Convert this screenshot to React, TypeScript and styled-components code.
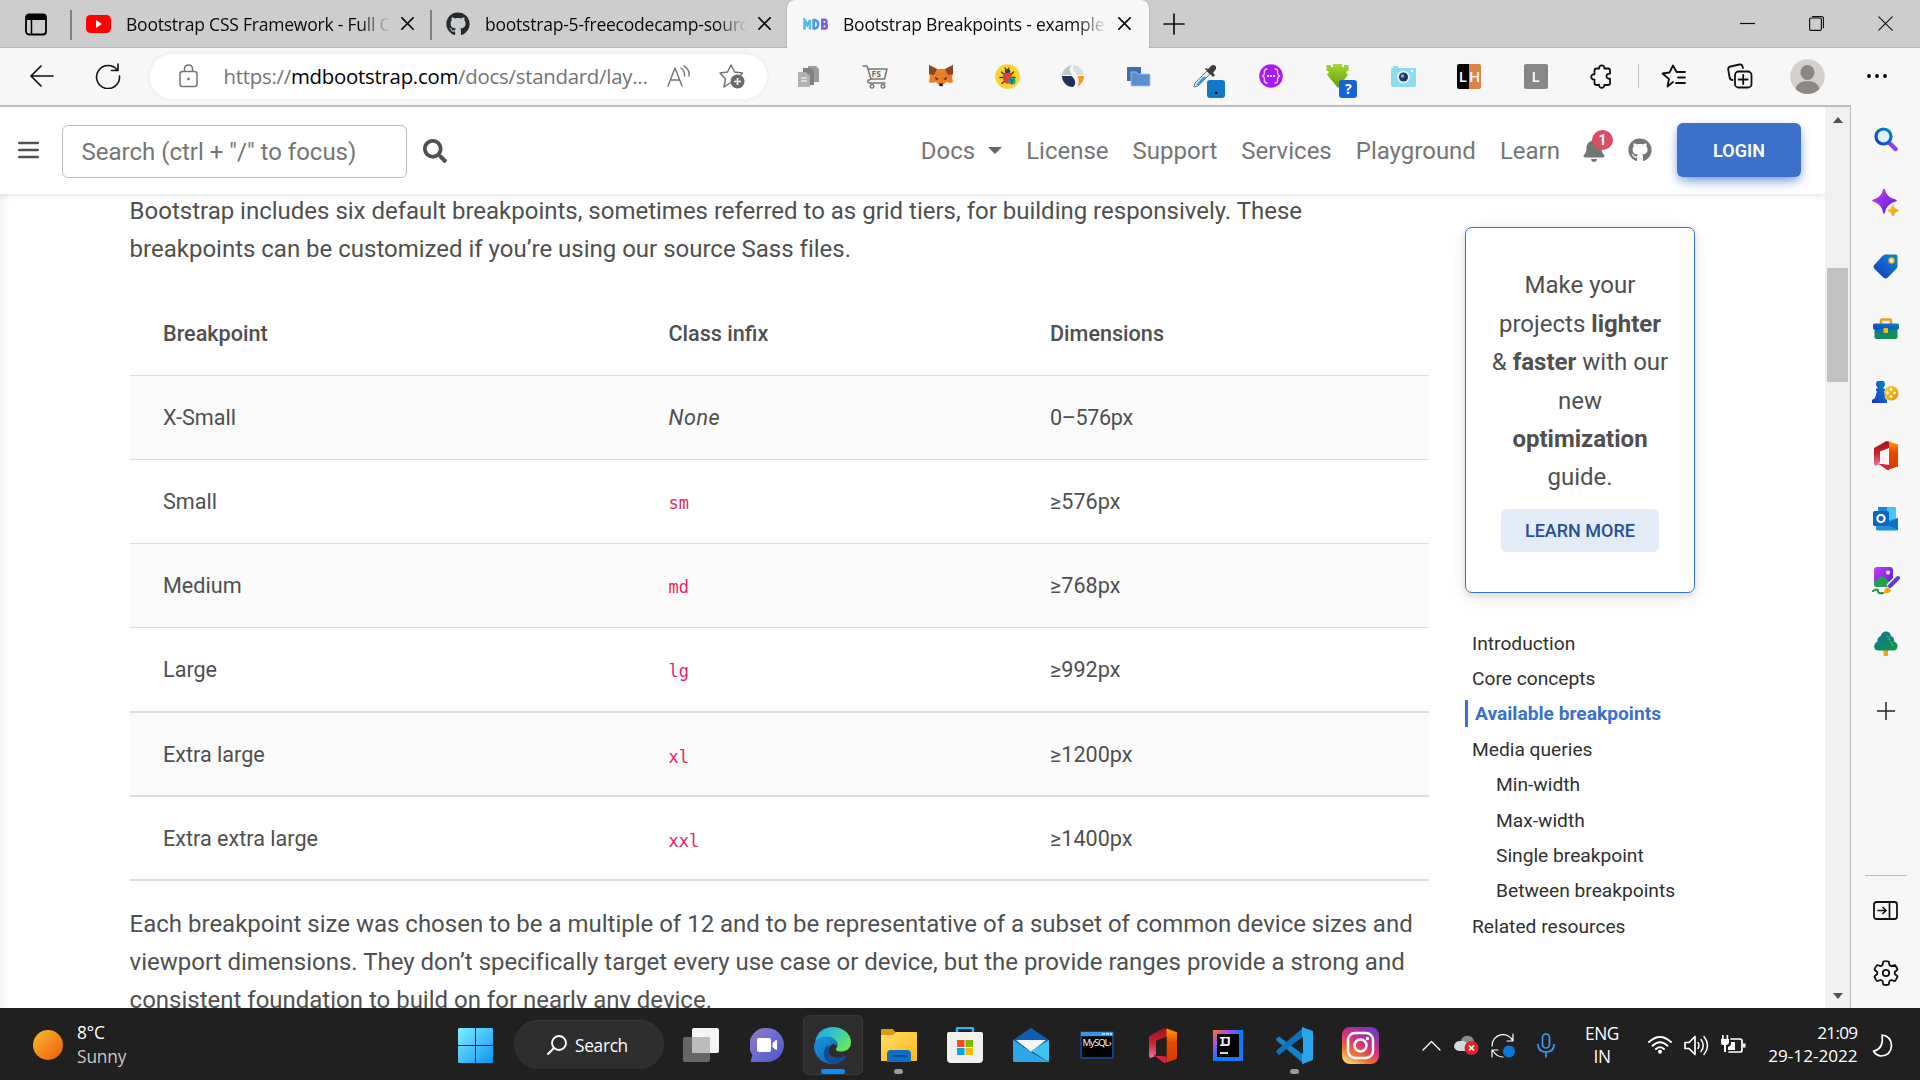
import React from 'react';
import styled, { createGlobalStyle, css } from 'styled-components';
import { FaBell, FaGithub, FaSearch } from 'react-icons/fa';

const Global = createGlobalStyle`
  * { box-sizing: border-box; }
  html, body { margin: 0; padding: 0; overflow: hidden; }
  body { font-family: Roboto, "Liberation Sans", sans-serif; color: #4f4f4f; }
  svg { display: block; flex: none; }
`;

const ui = css`font-family: "Open Sans", "Noto Sans", sans-serif;`;

const Screen = styled.div`
  width: 1920px; height: 1080px; display: flex; flex-direction: column; overflow: hidden; background: #fff;
`;

/* ---------- tab strip ---------- */
const TabStrip = styled.div`
  ${ui} height: 48px; flex: none; display: flex; background: #cdcdcd; box-shadow: inset 0 -1px 1px #b5b5b5;
`;
const TabActions = styled.div`
  width: 70px; display: flex; align-items: center; padding-left: 25px;
`;
const Tab = styled.div<{ $w: number; $active?: boolean; $pad: number }>`
  width: ${p => p.$w}px; display: flex; align-items: center; padding: 0 ${p => (p.$active ? 18 : 16)}px 1px ${p => p.$pad}px;
  position: relative;
  ${p => p.$active ? css`background: #f7f7f7; border-radius: 8px 8px 0 0; box-shadow: 0 0 2px #999; clip-path: inset(0 -3px 0 -3px);`
    : css`&::before { content: ''; position: absolute; left: 0; top: 10px; height: 30px; width: 1.5px; background: #808080; }`}
`;
const TabTitle = styled.div`
  flex: 1; min-width: 0; margin: 0 11px 0 15px; font-size: 17.5px; letter-spacing: -0.22px; line-height: 26px; color: #0a0a0a;
  white-space: nowrap; overflow: hidden;
  mask-image: linear-gradient(90deg, #000 calc(100% - 30px), transparent);
`;
const NewTab = styled.div`display: flex; align-items: center; padding-left: 14px; padding-bottom: 1px; flex: 1;`;
const WindowButtons = styled.div`
  display: flex; align-items: center; gap: 54px; padding-right: 27px; padding-bottom: 1px;
`;

/* ---------- toolbar ---------- */
const Toolbar = styled.div`
  ${ui} height: 57px; flex: none; display: flex; align-items: center; background: #f7f7f7; padding-bottom: 1px;
`;
const NavButtons = styled.div`
  width: 150px; display: flex; align-items: center; gap: 41px; padding-left: 29px; padding-bottom: 1px;
`;
const AddressBar = styled.div`
  width: 617px; height: 45px; border-radius: 23px; background: #fff; display: flex; align-items: center; padding: 0 21px 1px 29px;
  box-shadow: 0 0 5px rgba(0,0,0,.08);
`;
const Url = styled.div`
  flex: 1; margin-left: 25.5px; font-size: 20.4px; letter-spacing: -0.26px; color: #737373; white-space: nowrap;
  b { font-weight: 400; color: #000; }
`;
const AddressActions = styled.div`display: flex; align-items: center; gap: 28px;`;
const Extensions = styled.div`display: flex; margin-left: 9px;`;
const Slot = styled.div`
  width: 66.05px; height: 46px; display: flex; align-items: center; justify-content: center; position: relative;
`;
const SlotBadge = styled.span<{ $bg: string; $fg: string }>`
  position: absolute; left: 35px; bottom: 1px; width: 18px; height: 18px; border-radius: 3px;
  background: ${p => p.$bg}; color: ${p => p.$fg}; font-size: 14px; font-weight: 700; line-height: 18px; text-align: center;
`;
const Letters = styled.div<{ $bg: string }>`
  width: 24px; height: 25px; display: flex; align-items: center; justify-content: space-around; color: #fff;
  background: ${p => p.$bg}; font-size: 15px; border-radius: 2px; line-height: 25px; font-weight: 600;
`;
const Divider = styled.div`width: 1.5px; height: 24px; background: #c9c9c9; margin-left: 3px;`;
const BrowserActions = styled.div`
  display: flex; align-items: center; flex: 1; padding-left: 22px;
`;
const ActionSlot = styled.div<{ $w: number }>`width: ${p => p.$w}px; display: flex; align-items: center; justify-content: flex-start;`;

/* ---------- page ---------- */
const Body = styled.div`height: 903px; flex: none; display: flex; background: #f7f7f7;`;
const Viewport = styled.div`
  width: 1851px; border-top: 2px solid #bdbdbd; border-right: 1.5px solid #bdbdbd; display: flex; background: #fff; overflow: hidden;
`;
const Page = styled.div`
  width: 1825px; display: flex; flex-direction: column; overflow: hidden;
  background: linear-gradient(90deg, #f3f3f3, #fff 10px);
`;
const Header = styled.header`
  height: 87px; flex: none; display: flex; align-items: center; padding: 0 24px 0 18px;
  box-shadow: 0 1px 6px rgba(0,0,0,.14); z-index: 2; background: #fff;
`;
const MenuButton = styled.div`margin-bottom: 2px;`;
const SearchBox = styled.div`
  width: 345px; height: 53px; margin: 1px 16px 0 23px; border: 1px solid #bdbdbd; border-radius: 6px; padding-left: 18.5px;
  font-size: 24px; line-height: 52px; color: #757575;
`;
const SiteNav = styled.nav`
  margin-left: auto; display: flex; align-items: center; gap: 24px; font-size: 24px; color: #757575;
`;
const NavItem = styled.a`display: flex; align-items: center;`;
const Caret = styled.i`
  margin-left: 13px; border: 7px solid transparent; border-top-color: #666; border-bottom: 0;
`;
const BellWrap = styled.div`position: relative; width: 22px; margin: 0 0 2px -2px;`;
const BellBadge = styled.span`
  position: absolute; left: 10px; top: -8px; width: 21px; height: 20px; border-radius: 50%; background: #dc4c64; color: #fff;
  font: 700 14px/20px Roboto, sans-serif; text-align: center;
`;
const GithubLink = styled.a`margin: 0 1px 1px 0;`;
const Login = styled.button`
  width: 124px; height: 54px; border: 0; border-radius: 6px; background: #3b71ca; color: #fff; padding: 0; margin-bottom: 1px;
  font: 600 18px Roboto, sans-serif; box-shadow: 0 6px 13px -4px rgba(59,113,202,.75), 0 3px 8px rgba(59,113,202,.25);
`;
const Columns = styled.div`flex: 1; min-height: 0; display: flex;`;
const Article = styled.main`
  width: 1429px; padding: 0 0 0 130px; margin-top: -2.5px; flex: none;
`;
const Para = styled.p<{ $mt?: number }>`
  margin: ${p => p.$mt || 0}px 0 0 -0.4px; font-size: 24px; line-height: 38.2px; white-space: nowrap; letter-spacing: -0.006px;
`;
const Table = styled.div`margin-top: 25px;`;
const Row = styled.div<{ $head?: boolean; $striped?: boolean; $thick?: boolean; $h: number }>`
  display: grid; grid-template-columns: 505.5px 381.5px 1fr; align-items: center; height: ${p => p.$h}px;
  padding: ${p => (p.$thick && p.$h < 85 ? 2 : 0)}px 0 0 33px;
  font-size: 21.6px; font-weight: ${p => (p.$head ? 500 : 400)};
  background: ${p => (p.$striped ? '#fafafa' : '#fff')};
  border-bottom: ${p => (p.$thick ? 2 : 1)}px solid #dcdedd;
  em { letter-spacing: 0.5px; }
`;
const Code = styled.code`
  font-family: "DejaVu Sans Mono", monospace; font-size: 17px; color: #e91e63; padding-top: 4px;
`;
const Dimension = styled.span<{ $tight: boolean }>`letter-spacing: ${p => (p.$tight ? -0.38 : 0)}px;`;
const Aside = styled.aside`
  width: 360px; padding: 33px 0 0 36px; display: flex; flex-direction: column;
`;
const Card = styled.div`
  width: 230px; height: 366px; border: 1.5px solid #3b71ca; border-radius: 7px; background: #fff; text-align: center;
  box-shadow: 0 3px 8px rgba(0,0,0,.13), 0 4px 26px rgba(0,0,0,.06); padding: 38.4px 24px 0;
  font-size: 24px; line-height: 38.4px;
`;
const LearnMore = styled.button`
  width: 158px; height: 43px; margin: 12.6px auto 0; border: 0; border-radius: 6px; background: #e3ebf7; color: #285192;
  font: 500 18px Roboto, sans-serif; display: block; padding: 0;
`;
const Toc = styled.ul`list-style: none; margin: 32px 0 0; padding: 0; font-size: 19.2px; color: #303030;`;
const TocItem = styled.li<{ $indent?: boolean; $active?: boolean }>`
  height: 35.35px; line-height: 37px; padding-left: ${p => (p.$indent ? 31 : 7)}px; white-space: nowrap;
  ${p => p.$active && css`
    height: 27px; margin: 4.2px 0 4.15px; line-height: 28px; padding-left: 7px; border-left: 3px solid #3b71ca; color: #3b71ca; font-weight: 700;
  `}
`;
const Scrollbar = styled.div`
  width: 25px; background: #f0f0f0; display: flex; flex-direction: column; align-items: center;
`;
const ScrollArrow = styled.i<{ $down?: boolean }>`
  width: 0; border: 5.5px solid transparent;
  ${p => p.$down ? css`border-top: 6px solid #505050; border-bottom: 0; margin: auto 0 9px;` : css`border-bottom: 6px solid #505050; border-top: 0; margin-top: 10px;`}
`;
const ScrollThumb = styled.div`width: 21px; height: 114px; margin-top: 145px; background: #c1c1c1;`;

/* ---------- browser sidebar ---------- */
const Sidebar = styled.div`
  width: 69px; display: flex; flex-direction: column; align-items: center; padding-top: 4px;
`;
const SideSlot = styled.div<{ $h?: number }>`height: ${p => p.$h || 62.95}px; display: flex; align-items: center;`;
const SideRule = styled.div`width: 42px; height: 1px; background: #b9b9b9; margin-top: 128px; margin-bottom: 3px;`;

/* ---------- taskbar ---------- */
const Taskbar = styled.div`
  ${ui} height: 72px; flex: none; background: #202020; color: #fff; display: flex; align-items: center; font-size: 17.3px; padding-top: 2px;
`;
const Weather = styled.div`
  width: 442px; display: flex; align-items: center; padding-left: 33px; gap: 14px; line-height: 24px; letter-spacing: -0.1px;
`;
const Muted = styled.div`color: #c8c8c8;`;
const Start = styled.div`width: 72px; padding-left: 16px;`;
const TaskSearch = styled.div`
  width: 150px; height: 49px; border-radius: 25px; background: #2e2e2e; border-top: 1px solid #383838; display: flex; align-items: center;
  padding-left: 33px; gap: 8px; letter-spacing: -0.3px; margin-bottom: 1px;
`;
const Apps = styled.div`display: flex; margin-left: 4px; width: 737px;`;
const AppTile = styled.div<{ $active?: boolean }>`
  width: 60px; height: 60px; margin: 0 2.97px; display: flex; align-items: center; justify-content: center; border-radius: 6px; position: relative;
  ${p => p.$active && css`background: #2d2d2d; border: 1px solid #393939;`}
`;
const Indicator = styled.i<{ $active?: boolean }>`
  position: absolute; bottom: ${p => (p.$active ? 0 : 1)}px; width: ${p => (p.$active ? 24 : 9)}px; height: 5px; border-radius: 3px;
  background: ${p => (p.$active ? '#0c8cf5' : '#9a9a9a')};
`;
const Tray = styled.div`display: flex; align-items: center; flex: 1; padding-left: 17px;`;
const TrayGroup = styled.div<{ $gap: number }>`display: flex; align-items: center; gap: ${p => p.$gap}px;`;
const MicSlot = styled.div`margin-left: 21px;`;
const Lang = styled.div`width: 48px; margin: 0 21.5px 0 23px; text-align: center; line-height: 23px; letter-spacing: -0.4px;`;
const Clock = styled.div`
  width: 112px; text-align: right; line-height: 23px; font-size: 17.2px; letter-spacing: -0.05px; margin: 0 14px 2px 0; white-space: nowrap;
`;
const Time = styled.div`letter-spacing: -0.7px;`;

const line = (c = '#111', w = 1.6) => ({ fill: 'none', stroke: c, strokeWidth: w, strokeLinecap: 'round' as const, strokeLinejoin: 'round' as const });

const Defs = () => (
  <svg width="0" height="0" aria-hidden>
    <defs>
      <linearGradient id="purple" x1="0" y1="0" x2="1" y2="1"><stop stopColor="#d23bf0" /><stop offset="1" stopColor="#4b1fe0" /></linearGradient>
      <linearGradient id="blue" x1="0" y1="1" x2="1" y2="0"><stop stopColor="#1438c8" /><stop offset="1" stopColor="#0a8ac4" /></linearGradient>
      <linearGradient id="gold" x1="0" y1="0" x2="1" y2="1"><stop stopColor="#ffcf3f" /><stop offset="1" stopColor="#e39200" /></linearGradient>
      <linearGradient id="teal" x1="0" y1="0" x2="1" y2="1"><stop stopColor="#0f6fa8" /><stop offset="1" stopColor="#109a3c" /></linearGradient>
      <linearGradient id="officeL" x1="0" y1="0" x2="0" y2="1"><stop stopColor="#a30f1a" /><stop offset=".5" stopColor="#c92530" /><stop offset="1" stopColor="#e776ac" /></linearGradient>
      <linearGradient id="officeR" x1="0" y1="0" x2="0" y2="1"><stop stopColor="#ff9a00" /><stop offset=".4" stopColor="#e64a00" /><stop offset="1" stopColor="#d63a00" /></linearGradient>
      <linearGradient id="sun" x1="0" y1="0" x2="1" y2="1"><stop stopColor="#f5bd30" /><stop offset="1" stopColor="#f05a0a" /></linearGradient>
      <linearGradient id="win" x1="0" y1="0" x2="1" y2="1"><stop stopColor="#80f0ff" /><stop offset="1" stopColor="#0a94f5" /></linearGradient>
      <linearGradient id="chat" x1="0" y1="0" x2="1" y2="1"><stop stopColor="#9a78c0" /><stop offset=".5" stopColor="#6a6bd4" /><stop offset="1" stopColor="#5054c4" /></linearGradient>
      <linearGradient id="edgeTop" x1="0" y1="0" x2="1" y2=".6"><stop stopColor="#1d9fe0" /><stop offset=".5" stopColor="#33c4cc" /><stop offset="1" stopColor="#66e858" /></linearGradient>
      <linearGradient id="edgeLow" x1="0" y1="0" x2="1" y2="1"><stop stopColor="#1799e4" /><stop offset="1" stopColor="#0c59a4" /></linearGradient>
      <linearGradient id="folder" x1="0" y1="0" x2="1" y2="1"><stop stopColor="#ffdc6a" /><stop offset="1" stopColor="#fdb913" /></linearGradient>
      <linearGradient id="jet" x1="0" y1="0" x2="1" y2="1"><stop stopColor="#f97a12" /><stop offset=".25" stopColor="#b84be0" /><stop offset=".5" stopColor="#087cfa" /><stop offset="1" stopColor="#2a72f0" /></linearGradient>
      <linearGradient id="insta" x1=".2" y1="1" x2=".8" y2="0"><stop stopColor="#fed576" /><stop offset=".25" stopColor="#f47133" /><stop offset=".55" stopColor="#d62f7c" /><stop offset="1" stopColor="#6a3ac8" /></linearGradient>
      <linearGradient id="green" x1="0" y1="0" x2="0" y2="1"><stop stopColor="#a6d82c" /><stop offset="1" stopColor="#5d9d14" /></linearGradient>
    </defs>
  </svg>
);

const Cross = ({ s = 13, w = 1.7 }: { s?: number; w?: number }) => (
  <svg width={s} height={s} viewBox="0 0 13 13"><path d="M.7.7l11.6 11.6M12.3.7L.7 12.3" {...line('#111', w)} /></svg>
);
const TabMenuIcon = () => (
  <svg width="22" height="23" viewBox="0 0 22 23"><rect x="1" y="1.5" width="20" height="20" rx="3" {...line('#000', 1.8)} /><path d="M1 2h20v5H1z" /><path d="M6.5 7v14" {...line('#000', 1.5)} /></svg>
);
const YouTube = () => (
  <svg width="25" height="18" viewBox="0 0 25 18"><rect width="25" height="18" rx="4.5" fill="#f00" /><path d="M10 5v8l6-4z" fill="#fff" /></svg>
);
const MdbIcon = () => (
  <svg width="25" height="12" viewBox="0 0 25 12" fill="none" strokeWidth="2.6">
    <path d="M1.5 11.500V2l2.800 5L7 2v9.500" stroke="#4bc0ec" /><path d="M10.700 2v8.500c6 .6 6-9 0-8.500z" stroke="#4596e0" /><path d="M19.300 1.700v8.800h3c2 0 2-4.300-.3-4.300h-2.700 2.700c2 0 2-4.500-.3-4.500z" stroke="#7a62cc" />
  </svg>
);
const Puzzle = () => (
  <svg width="24" height="25" viewBox="0 0 24 25"><path d="M6.500 4.500h2.700c-.9-4.300 6-4.300 5.100 0H18q2 0 2 2v3.200c-4.700-.6-4.700 5.600 0 5V19q0 2-2 2h-3.700c.6 3.700-5.700 3.700-5.100 0H6.500q-2 0-2-2v-3.500c-4.300.8-4.300-6 0-5.200V6.500q0-2 2-2z" {...line('#111', 1.8)} /></svg>
);
const Mic = () => (
  <svg width="18" height="25" viewBox="0 0 18 25"><rect x="5.500" y="1" width="7" height="14" rx="3.500" {...line('#3b9cf0', 1.7)} /><path d="M1 11.500q0 7.500 8 7.500t8-7.500M9 19v5" {...line('#3b9cf0', 1.7)} /></svg>
);

const extensionIcons: React.ReactNode[] = [
  <svg width="22" height="23" viewBox="0 0 22 23"><path d="M10 1h8l3 3v13H10z" fill="#9c9c9c" /><path d="M5 3h8l3 3v14H5z" fill="#7f7f7f" /><path d="M0 7h8l4 4v11H0z" fill="#b1b1b1" /><path d="M3 13h6M3 16h6" stroke="#e6e6e6" strokeWidth="1.5" /></svg>,
  <svg width="26" height="25" viewBox="0 0 26 25"><path d="M1 2h4l4 13h13.500L25 5H6M9 15l-3 1.500q-1 2.500 2 2.500h15" {...line('#757575', 1.5)} /><circle cx="10" cy="22.300" r="1.800" {...line('#757575', 1.4)} /><circle cx="21" cy="22.300" r="1.800" {...line('#757575', 1.4)} /><text x="9.500" y="13.200" fontSize="8.500" fontWeight="700" fontFamily="Open Sans" fill="#6a6a6a">FS</text></svg>,
  <svg width="24" height="23" viewBox="0 0 24 23"><path d="M0 0l8 4h8l8-4v9l-1 3 1 5-2 1-5-1-2 2H9l-2-2-5 1-2-1 1-5-1-3z" fill="#ee7d22" /><path d="M0 0l8 4-3 6-5-1zM24 0l-8 4 3 6 5-1z" fill="#85492a" /><path d="M6 12l4 2-3 1zM18 12l-4 2 3 1z" fill="#333" /><path d="M9 19h6l-1 3h-4z" fill="#ddd2c8" /><path d="M10 18.500h4l-.6 2.500h-2.800z" fill="#111" /></svg>,
  <svg width="25" height="25" viewBox="0 0 25 25"><circle cx="12.500" cy="12.500" r="12.300" fill="#fbd32f" /><path d="M6.500 8l3 3M5 13.500h4M7 19.500l3-3M18.500 8l-3 3M20 13.500h-4M10 4l2 3 2-3" {...line('#4a3324', 1.3)} /><ellipse cx="12.500" cy="13.500" rx="4.500" ry="6.200" fill="#e2403f" /><ellipse cx="12.500" cy="7" rx="2.800" ry="2" fill="#463a30" /><circle cx="17" cy="17" r="3.500" fill="#15a98d" /><path d="M15.500 15.300l1.500 1.700 1.500-1.700M17 17v2" {...line('#064', 1)} /></svg>,
  <svg width="22" height="22" viewBox="0 0 22 22"><path d="M10 0A11 11 0 000 10h10.500C7 7 7 3 10 0z" fill="#c5c8cb" /><path d="M12 0c-3 4 1 7 4 10h6A11 11 0 0012 0z" fill="#dcdee0" /><path d="M0 11a11 11 0 0011 11c4-3 2-8-1.500-11z" fill="#232c5c" /><path d="M15.500 11H22c0 5-3 9-7 10.500 2-3 2.500-7 .5-10.500z" fill="#f8981d" /></svg>,
  <svg width="24" height="21" viewBox="0 0 24 21"><path d="M0 1h14v14H0z" fill="#3f6fb0" /><path d="M4 6h5l2 2h12v12H4z" fill="#5b8fd2" stroke="#a9c5ea" strokeWidth=".8" /></svg>,
  <svg width="26" height="25" viewBox="0 0 26 25"><path d="M2 23l1-4L15 7l3 3L6 22z" fill="#d9e8f2" stroke="#777" /><path d="M4 21l7-8h3.500l-8 8z" fill="#2a9ae0" /><path d="M13 5l8 8 2-2-2-2 3-4c1-4-3-5-5-3l-3 3-2-1z" fill="#3d3d3d" /></svg>,
  <svg width="24" height="24" viewBox="0 0 24 24"><circle cx="12" cy="12" r="11.800" fill="#a91cf0" /><path d="M8 5q-3 0-2.500 3.500 0 2.500-2 3.500 2 1 2 3.500Q5 19 8 19M16 5q3 0 2.500 3.500 0 2.500 2 3.500-2 1-2 3.500Q19 19 16 19" {...line('#e9c9fb', 1.4)} /><path d="M9 12h.1M12 12h.1M15 12h.1" {...line('#fff', 2)} /></svg>,
  <svg width="25" height="25" viewBox="0 0 25 25"><path d="M1.500 1h4.500v2h2V0h9v3h2V1h4.500v6h-2v3h2L13 24 1.500 10h2V7h-2z" fill="url(#green)" /></svg>,
  <svg width="25" height="22" viewBox="0 0 25 22"><path d="M1 3h1V1h5v2h17q1 0 1 1v16q0 2-2 2H2q-2 0-2-2V4z" fill="#8bdcec" /><circle cx="12.500" cy="12" r="6.300" fill="#e4f6fa" /><circle cx="12.500" cy="12" r="4.600" fill="#1d3a5e" /><circle cx="11.500" cy="11" r="1.700" fill="#7ab0d8" /><circle cx="21" cy="6" r="1.200" fill="#fff" /></svg>,
  <Letters $bg="linear-gradient(90deg,#000 50%,#e08245 50%)"><span>L</span><span>H</span></Letters>,
  <Letters $bg="#878787">L</Letters>,
  <Puzzle />,
];
const badges: Record<number, [string, string, string]> = { 6: ['.', '#0f78c8', '#000'], 8: ['?', '#1565d8', '#fff'] };

const Office = ({ w = 24, h = 29, hole = '#f7f7f7' }: { w?: number; h?: number; hole?: string }) => (
  <svg width={w} height={h} viewBox="0 0 24 29" preserveAspectRatio="none"><path d="M0 7L12.500 0 16 1v7L6 11v12l-5 2-1-2z" fill="url(#officeL)" /><path d="M15 .5l9 3v22l-9 3z" fill="url(#officeR)" /><path d="M4 22.500l11 1.200V29h-2z" fill="#d8203c" /><path d="M6 10.500L15 7v16.500L4 22.500l2-1z" fill={hole} /></svg>
);

const sidebarIcons: React.ReactNode[] = [
  <svg width="24" height="26" viewBox="0 0 24 26"><path d="M15.500 16l6 6" stroke="#8b45e8" strokeWidth="4.500" strokeLinecap="round" /><circle cx="9.500" cy="9.500" r="7.500" fill="#dff4ff" stroke="url(#blue)" strokeWidth="3.200" /></svg>,
  <svg width="28" height="28" viewBox="0 0 28 28"><path d="M12 0q1.500 9 12 11.500Q13.500 14.500 12 24 10.500 14.500 1 11.500 10.500 9 12 0z" fill="url(#purple)" stroke="url(#purple)" strokeWidth="1.500" strokeLinejoin="round" /><path d="M21 16q.8 4.500 5.500 5.500-4.700 1.200-5.500 5.500-.8-4.300-5.500-5.500Q20.200 20.500 21 16z" fill="url(#gold)" stroke="url(#gold)" /></svg>,
  <svg width="25" height="25" viewBox="0 0 25 25"><path d="M12 .5h11q1.500 0 1.500 1.500v10q0 1.500-1 2.500l-9 9.200q-2 1.600-4 0l-9-9q-2-2 0-4L9.500 2Q11 .5 12 .5z" fill="url(#blue)" /><circle cx="18.500" cy="6.500" r="2.500" fill="#d8f4ff" stroke="#f5b81c" strokeWidth="1.500" /></svg>,
  <svg width="26" height="22" viewBox="0 0 26 22"><path d="M8 7V3q0-1.500 1.500-1.500h7Q18 1.500 18 3v4" fill="none" stroke="#e2a314" strokeWidth="2.500" /><rect x="1.500" y="8" width="23" height="13" rx="2" fill="url(#teal)" /><rect y="5.500" width="26" height="6" rx="1.500" fill="url(#blue)" /><rect x="10.500" y="10" width="4.500" height="5" rx="1" fill="#f8b91f" /></svg>,
  <svg width="27" height="23" viewBox="0 0 27 23"><rect x="12" y="5" width="14.500" height="14.500" rx="7" fill="url(#gold)" /><g fill="#fff5d0"><circle cx="19" cy="8.500" r="1.400" /><circle cx="15.500" cy="12" r="1.400" /><circle cx="22.500" cy="12" r="1.400" /><circle cx="19" cy="15.500" r="1.400" /></g><path d="M5 10h-1V8l2-1a4.500 4.500 0 115 0l2 1v2h-1l1 7 2 2v3H0v-3l3-2z" fill="url(#blue)" /></svg>,
  <Office />,
  <svg width="25" height="25" viewBox="0 0 25 25"><rect x="5" y="1" width="18" height="14" rx="1" fill="#49c5f3" /><path d="M5 1h9v8H5z" fill="#1a86d9" /><path d="M3 12l10 3 12-3v11q0 1.500-1.500 1.500h-18Q3 24.500 3 23z" fill="#1c94e0" /><path d="M25 12L13 18l12 6z" fill="#1270b8" /><rect y="5" width="16" height="15" rx="1.500" fill="#0b66c3" /><circle cx="8" cy="12.500" r="3.600" fill="none" stroke="#fff" strokeWidth="2.200" /></svg>,
  <svg width="28" height="28" viewBox="0 0 28 28"><rect x="2" y="0" width="19" height="19" rx="3" fill="url(#purple)" /><circle cx="16" cy="5.500" r="2" fill="#fff" /><path d="M2 15l6-5q2-1.500 4 0l7 6q-2 4-6 4H4q-2 0-2-3z" fill="#24a04f" /><path d="M17 20l9-9" stroke="#f7f7f7" strokeWidth="7" /><path d="M18 19l8-8" stroke="#5b3be0" strokeWidth="4" strokeLinecap="round" /><path d="M12 26q0-5 4-6l3 3q-1 4-7 3z" fill="#f0a818" /><path d="M1 24q5-3 5 0t5 2" {...line('#158a3e', 2)} /></svg>,
  <svg width="24" height="26" viewBox="0 0 24 26"><rect x="9.500" y="17" width="4.500" height="8" rx="1" fill="#f3a21a" /><path d="M12 .5q4 0 5 4.500 4 1.500 3 5.500 4 1.500 3.500 5-.5 4-4 4h-15q-4 0-4.300-3.500-.2-3.500 3.300-5.500-.7-4 3.200-5.500Q8 .5 12 .5z" fill="url(#teal)" /><path d="M13 5q3 1 3 4M16 11q3 1 3 4" {...line('#4cc07c', 1)} /></svg>,
];

const rows: [string, string, string, number][] = [
  ['X-Small', '', '0–576px', 84], ['Small', 'sm', '≥576px', 84], ['Medium', 'md', '≥768px', 84],
  ['Large', 'lg', '≥992px', 85], ['Extra large', 'xl', '≥1200px', 84], ['Extra extra large', 'xxl', '≥1400px', 84],
];
const toc: { t: string; indent?: boolean; active?: boolean }[] = [
  { t: 'Introduction' }, { t: 'Core concepts' }, { t: 'Available breakpoints', active: true }, { t: 'Media queries' },
  { t: 'Min-width', indent: true }, { t: 'Max-width', indent: true }, { t: 'Single breakpoint', indent: true },
  { t: 'Between breakpoints', indent: true }, { t: 'Related resources' },
];

const apps: { icon: React.ReactNode; active?: boolean; running?: boolean }[] = [
  { icon: <svg width="36" height="35" viewBox="0 0 36 35"><rect y="9" width="27" height="25" rx="2" fill="#666" /><rect x="9" width="27" height="25" rx="2" fill="#f4f4f4" /><path d="M9 9h18v16H9z" fill="#bcbcbc" /></svg> },
  { icon: <svg width="34" height="35" viewBox="0 0 34 35"><path d="M17 0a17 17 0 110 34H2q-2 0-1-2l1.500-5A17 17 0 0117 0z" fill="url(#chat)" /><rect x="7" y="10" width="14" height="14" rx="2" fill="#fff" /><path d="M22.500 15l3.500-3q1 0 1 1v8q0 1-1 1l-3.500-3z" fill="#fff" /></svg> },
  { active: true, icon: <svg width="37" height="37" viewBox="0 0 37 37"><path d="M1 15C3 5 10 0 19 0c10 0 18 7 18 15 0 7-5 9.500-10 9.500-4 0-6-1.500-4.500-3.500C26 16 20 10 13 10 7 10 2 13 1 15z" fill="url(#edgeTop)" /><path d="M0 19C1 12 7 9.500 13 9.500c7 0 11 5.500 9.500 9.500-2-3-7-2-8 3-1 7 7 12 17 8-3 5-8 7-13 7C8 37 0 29 0 19z" fill="url(#edgeLow)" /><path d="M14.500 22c-1 7 7 12 18.500 6-3 6-9 9-14.500 9C10 35 6 24 14.500 17.500z" fill="#114c94" /></svg> },
  { running: true, icon: <svg width="36" height="34" viewBox="0 0 36 34"><path d="M0 2q0-1 1-1h11l3 4v6H0z" fill="#dd9a10" /><path d="M0 7h12l3-3h20q1 0 1 1v28H0z" fill="url(#folder)" /><path d="M6 34V26q0-4 4-4h16q4 0 4 4v8z" fill="#0f6fc4" /><path d="M11 28h14" stroke="#0a4e92" strokeWidth="2" strokeLinecap="round" /></svg> },
  { icon: <svg width="36" height="36" viewBox="0 0 36 36"><path d="M10 8V2q0-1 1-1h14q1 0 1 1v6" {...line('#33b2ee', 2.500)} /><path d="M0 7q0-2 2-2h32q2 0 2 2v25q0 4-4 4H4q-4 0-4-4z" fill="#f0f0f0" /><path d="M10 13h7.500v7H10z" fill="#f25022" /><path d="M18.500 13H26v7h-7.500z" fill="#7fba00" /><path d="M10 21h7.500v7H10z" fill="#00a4ef" /><path d="M18.500 21H26v7h-7.500z" fill="#ffb900" /></svg> },
  { icon: <svg width="36" height="35" viewBox="0 0 36 35"><path d="M0 12L18 0l18 12v6H0z" fill="#0f5fae" /><path d="M3 12h30L18 24z" fill="#f5f5f5" /><path d="M0 12l18 12 18 10H1q-1 0-1-1z" fill="#2ba7ea" /><path d="M36 12L18 23l18 11z" fill="#3cc4f4" /></svg> },
  { icon: <svg width="34" height="28" viewBox="0 0 34 28"><rect width="34" height="28" rx="1.500" fill="#163e7c" /><path d="M1 1h32v4H1z" fill="#3c94e0" /><path d="M22 2h3v2h-3zM26 2h3v2h-3zM30 2h2v2h-2z" fill="#a8d6f8" /><path d="M2 5.500h30V26H2z" fill="#000" /><text x="2.500" y="14.500" fontSize="9.500" fontFamily="Open Sans" fill="#fff" textLength="29">MySQL›</text></svg> },
  { icon: <Office w={28} h={35} hole="#202020" /> },
  { icon: <svg width="30" height="31" viewBox="0 0 30 31"><path d="M0 0h30v31H0z" fill="url(#jet)" /><path d="M4 4h22v23H4z" fill="#000" /><text x="6" y="16" fontSize="12" fontWeight="700" fontFamily="DejaVu Sans Mono" fill="#fff" textLength="12">IJ</text><path d="M7 23h8" stroke="#fff" strokeWidth="1.700" /></svg> },
  { running: true, icon: <svg width="37" height="37" viewBox="0 0 37 37"><path d="M0 12l3-2.500L28 28v9L1 14z" fill="#1481c8" /><path d="M0 25l3 3L28 9V0L1 23z" fill="#0f72b8" /><path d="M26 0l11 4v29l-11 4z" fill="#2aa6ee" /><path d="M27 10v17L15.500 18.500z" fill="#202020" /></svg> },
  { icon: <svg width="37" height="37" viewBox="0 0 37 37"><rect width="37" height="37" rx="8" fill="url(#insta)" /><rect x="6" y="6" width="25" height="25" rx="7" fill="none" stroke="#fff" strokeWidth="2.500" /><circle cx="18.500" cy="18.500" r="6" fill="none" stroke="#fff" strokeWidth="2.500" /><circle cx="25.500" cy="11.500" r="1.700" fill="#fff" /></svg> },
];

export default function App() {
  return (
    <Screen>
      <Global />
      <TabStrip>
        <TabActions><TabMenuIcon /></TabActions>
        <Tab $w={360} $pad={16}><YouTube /><TabTitle>Bootstrap CSS Framework - Full Course</TabTitle><Cross /></Tab>
        <Tab $w={357} $pad={16}><FaGithub size={24} color="#24292e" /><TabTitle>bootstrap-5-freecodecamp-source</TabTitle><Cross /></Tab>
        <Tab $w={362} $pad={16} $active><MdbIcon /><TabTitle>Bootstrap Breakpoints - examples</TabTitle><Cross /></Tab>
        <NewTab><svg width="22" height="22" viewBox="0 0 22 22"><path d="M11 1v20M1 11h20" {...line('#111', 1.7)} /></svg></NewTab>
        <WindowButtons>
          <svg width="15" height="15" viewBox="0 0 15 15"><path d="M0 7.500h15" stroke="#111" strokeWidth="1.200" /></svg>
          <svg width="15" height="15" viewBox="0 0 15 15"><rect x=".6" y="2" width="11.800" height="12.400" rx="1.500" {...line('#111', 1.2)} /><path d="M3.500.6h9q2 0 2 2v9" {...line('#111', 1.2)} /></svg>
          <Cross s={15} w={1} />
        </WindowButtons>
      </TabStrip>

      <Toolbar>
        <NavButtons>
          <svg width="25" height="22" viewBox="0 0 25 22"><path d="M24 11H2M12 1L2 11l10 10" {...line('#111', 1.7)} /></svg>
          <svg width="26" height="26" viewBox="0 0 26 26"><path d="M22.500 7.500A11.500 11.500 0 1024.500 13M23 1v6.500h-6.500" {...line('#111', 1.6)} /></svg>
        </NavButtons>
        <AddressBar>
          <svg width="19" height="24" viewBox="0 0 19 24"><rect x="1" y="7.500" width="17" height="15" rx="2.500" {...line('#737373', 1.5)} /><path d="M5.500 7V5q0-4 4-4t4 4v2" {...line('#737373', 1.5)} /><circle cx="9.500" cy="15" r="1.400" fill="#737373" /></svg>
          <Url>https://<b>mdbootstrap.com</b>/docs/standard/lay...</Url>
          <AddressActions>
            <svg width="24" height="22" viewBox="0 0 24 22"><path d="M1 21L8 3l7 18M3.500 15h9M14 3q4 3 3.500 8M17 .8q6 4 5 10.200" {...line('#737373', 1.4)} /></svg>
            <svg width="27" height="26" viewBox="0 0 27 26"><path d="M11 20l-6 4 1.500-8L1 10l7.500-1L12 2l3.500 7 8 1-1.500 2" {...line('#737373', 1.5)} /><circle cx="18.500" cy="18.500" r="7" fill="#6b6b6b" /><path d="M18.500 15v7M15 18.500h7" stroke="#fff" strokeWidth="1.600" /></svg>
          </AddressActions>
        </AddressBar>
        <Extensions>
          {extensionIcons.map((icon, i) => (
            <Slot key={i}>{icon}{badges[i] && <SlotBadge $bg={badges[i][1]} $fg={badges[i][2]}>{badges[i][0]}</SlotBadge>}</Slot>
          ))}
        </Extensions>
        <Divider />
        <BrowserActions>
          <ActionSlot $w={66}><svg width="26" height="25" viewBox="0 0 26 25"><path d="M12 18l-5.500 4.500L8 15 1.500 9.500l7-1L12 1.500 15.500 8H24M17 13.500h7M15 19h9" {...line('#111', 1.8)} /></svg></ActionSlot>
          <ActionSlot $w={63}><svg width="26" height="26" viewBox="0 0 26 26"><path d="M5.500 17Q3 17 2.500 14L1.200 6.500Q1 4 3.500 3.500l9-2Q15 1 15.700 4l.3 1" {...line('#111', 1.8)} /><rect x="8" y="8.500" width="16.500" height="16" rx="3.500" {...line('#111', 1.8)} /><path d="M16.200 12v9M11.700 16.500h9" {...line('#111', 1.8)} /></svg></ActionSlot>
          <ActionSlot $w={76}><svg width="35" height="35" viewBox="0 0 35 35"><circle cx="17.500" cy="17.500" r="17.300" fill="#d3d1ce" /><ellipse cx="17.500" cy="13.500" rx="7" ry="7.500" fill="#8b8783" /><path d="M5.500 30q2-8 12-8t12 8a17 17 0 01-24 0z" fill="#8b8783" /></svg></ActionSlot>
          <svg width="22" height="6" viewBox="0 0 22 6"><circle cx="3" cy="3" r="1.900" /><circle cx="11" cy="3" r="1.900" /><circle cx="19" cy="3" r="1.900" /></svg>
        </BrowserActions>
      </Toolbar>

      <Body>
        <Viewport>
          <Page>
            <Header>
              <MenuButton><svg width="21" height="18" viewBox="0 0 21 18"><path d="M1.300 2h18.400M1.300 9h18.400M1.300 16h18.400" {...line('#4f4f4f', 2.600)} /></svg></MenuButton>
              <SearchBox>Search (ctrl + "/" to focus)</SearchBox>
              <FaSearch size={24} color="#4f4f4f" />
              <SiteNav>
                <NavItem>Docs<Caret /></NavItem>
                <NavItem>License</NavItem><NavItem>Support</NavItem><NavItem>Services</NavItem><NavItem>Playground</NavItem><NavItem>Learn</NavItem>
                <BellWrap><FaBell size={24} color="#757575" /><BellBadge>1</BellBadge></BellWrap>
                <GithubLink><FaGithub size={24} color="#757575" /></GithubLink>
                <Login>LOGIN</Login>
              </SiteNav>
            </Header>
            <Columns>
              <Article>
                <Para>Bootstrap includes six default breakpoints, sometimes referred to as grid tiers, for building responsively. These<br />breakpoints can be customized if you’re using our source Sass files.</Para>
                <Table>
                  <Row $head $h={83}><span>Breakpoint</span><span>Class infix</span><span>Dimensions</span></Row>
                  {rows.map(([name, infix, dim, h], i) => (
                    <Row key={name} $h={h} $striped={i % 2 === 0} $thick={i > 2}>
                      <span>{name}</span>{infix ? <Code>{infix}</Code> : <em>None</em>}<Dimension $tight={i === 0}>{dim}</Dimension>
                    </Row>
                  ))}
                </Table>
                <Para $mt={24}>Each breakpoint size was chosen to be a multiple of 12 and to be representative of a subset of common device sizes and<br />viewport dimensions. They don’t specifically target every use case or device, but the provide ranges provide a strong and<br />consistent foundation to build on for nearly any device.</Para>
              </Article>
              <Aside>
                <Card>
                  Make your projects <b>lighter</b> &amp; <b>faster</b> with our new <b>optimization</b> guide.
                  <LearnMore>LEARN MORE</LearnMore>
                </Card>
                <Toc>{toc.map(i => <TocItem key={i.t} $indent={i.indent} $active={i.active}>{i.t}</TocItem>)}</Toc>
              </Aside>
            </Columns>
          </Page>
          <Scrollbar><ScrollArrow /><ScrollThumb /><ScrollArrow $down /></Scrollbar>
        </Viewport>
        <Sidebar>
          {sidebarIcons.map((icon, i) => <SideSlot key={i}>{icon}</SideSlot>)}
          <SideSlot $h={72}><svg width="18" height="18" viewBox="0 0 18 18"><path d="M9 0v18M0 9h18" stroke="#222" strokeWidth="1.500" /></svg></SideSlot>
          <SideRule />
          <SideSlot $h={62}><svg width="25" height="19" viewBox="0 0 25 19"><rect x="1" y="1" width="23" height="17" rx="2.500" {...line('#111', 1.8)} /><path d="M16.500 1v17M5 9.500h8M10 6.500l3 3-3 3" {...line('#111', 1.7)} /></svg></SideSlot>
          <SideSlot $h={64}><svg width="26" height="26" viewBox="0 0 26 26"><path d="M10.300 1.500q2.700-.8 5.400 0l.8 3.600 1.800 1 3.500-1.100q2 2 2.700 4.700L21.800 12v2l2.700 2.400q-.8 2.700-2.700 4.700l-3.500-1.100-1.800 1-.8 3.600q-2.700.8-5.400 0l-.8-3.600-1.800-1L4.200 21.100q-2-2-2.700-4.700L4.200 14v-2L1.500 9.700q.8-2.700 2.700-4.700l3.500 1.100 1.800-1z" {...line('#111', 1.8)} /><circle cx="13" cy="13" r="3.200" {...line('#111', 1.8)} /></svg></SideSlot>
        </Sidebar>
      </Body>

      <Taskbar>
        <Weather>
          <svg width="30" height="30" viewBox="0 0 30 30"><circle cx="15" cy="15" r="15" fill="url(#sun)" /></svg>
          <div><div>8°C</div><Muted>Sunny</Muted></div>
        </Weather>
        <Start><svg width="35" height="35" viewBox="0 0 35 35"><path d="M1 0h16v17H0V1zM18 0h16l1 1v16H18zM0 18h17v17H1l-1-1zM18 18h17v16l-1 1H18z" fill="url(#win)" /></svg></Start>
        <TaskSearch>
          <svg width="20" height="20" viewBox="0 0 20 20"><circle cx="12" cy="8" r="7" {...line('#fff', 1.9)} /><path d="M7 13l-6 6" {...line('#fff', 1.9)} /></svg>
          Search
        </TaskSearch>
        <Apps>
          {apps.map((a, i) => (
            <AppTile key={i} $active={a.active}>{a.icon}{(a.active || a.running) && <Indicator $active={a.active} />}</AppTile>
          ))}
        </Apps>
        <Tray>
          <TrayGroup $gap={12.5}>
            <svg width="19" height="11" viewBox="0 0 19 11"><path d="M1 10l8.500-8.500L18 10" {...line('#fff', 1.3)} /></svg>
            <svg width="25" height="20" viewBox="0 0 25 20"><path d="M7 5q3-5 8-4 5 1 5 6l-8 4z" fill="#8d8d8d" /><path d="M5 16q-5-1-5-5 1-5 6-5 5-1 8 4l-3 6z" fill="#d8d8d8" /><circle cx="17.500" cy="13" r="7" fill="#d9252c" /><path d="M15 10.500l5 5M20 10.500l-5 5" stroke="#fff" strokeWidth="1.700" /></svg>
            <svg width="25" height="25" viewBox="0 0 25 25"><path d="M1 13A11 11 0 0122 8V1M22 8h-6M1 24v-7h6M2 18q4 6 10 6" {...line('#fff', 1.2)} /><circle cx="18" cy="18.500" r="6" fill="#0a78d8" /></svg>
          </TrayGroup>
          <MicSlot><Mic /></MicSlot>
          <Lang>ENG<br />IN</Lang>
          <TrayGroup $gap={12}>
            <svg width="24" height="18" viewBox="0 0 24 18"><path d="M1 6q11-10 22 0M4.500 9.700q7.500-7 15 0M8 13q4-3.500 8 0" {...line('#fff', 1.9)} /><circle cx="12" cy="15.800" r="2" fill="#fff" /></svg>
            <svg width="25" height="21" viewBox="0 0 25 21"><path d="M1 7.500h4l6-6v18l-6-6H1z" {...line('#fff', 1.7)} /><path d="M14 7.500q2 3 0 6M17 4.500q4.500 6 0 12M20 1.500q7 9 0 18" {...line('#fff', 1.5)} /></svg>
            <svg width="25" height="20" viewBox="0 0 25 20"><path d="M0 4h8v4q-1 2-3 2v7H3v-7q-3 0-3-2zM1 0h1.700v4H1zM5.500 0h1.700v4H5.500z" fill="#fff" /><path d="M10 4h9q2 0 2 2v9q0 2-2 2H8" {...line('#fff', 1.7)} /><path d="M10 7h4v8H7v-3q3-1 3-3zM22 8.500h2.500v4H22z" fill="#fff" /></svg>
          </TrayGroup>
          <Clock><Time>21:09</Time><div>29-12-2022</div></Clock>
          <svg width="21" height="23" viewBox="0 0 21 23"><path d="M10 1q9 1 9.500 10.500Q19 21.500 9 22q-5-.5-7.500-5Q12 15 10 1z" {...line('#fff', 1.7)} /></svg>
        </Tray>
      </Taskbar>
      <Defs />
    </Screen>
  );
}
